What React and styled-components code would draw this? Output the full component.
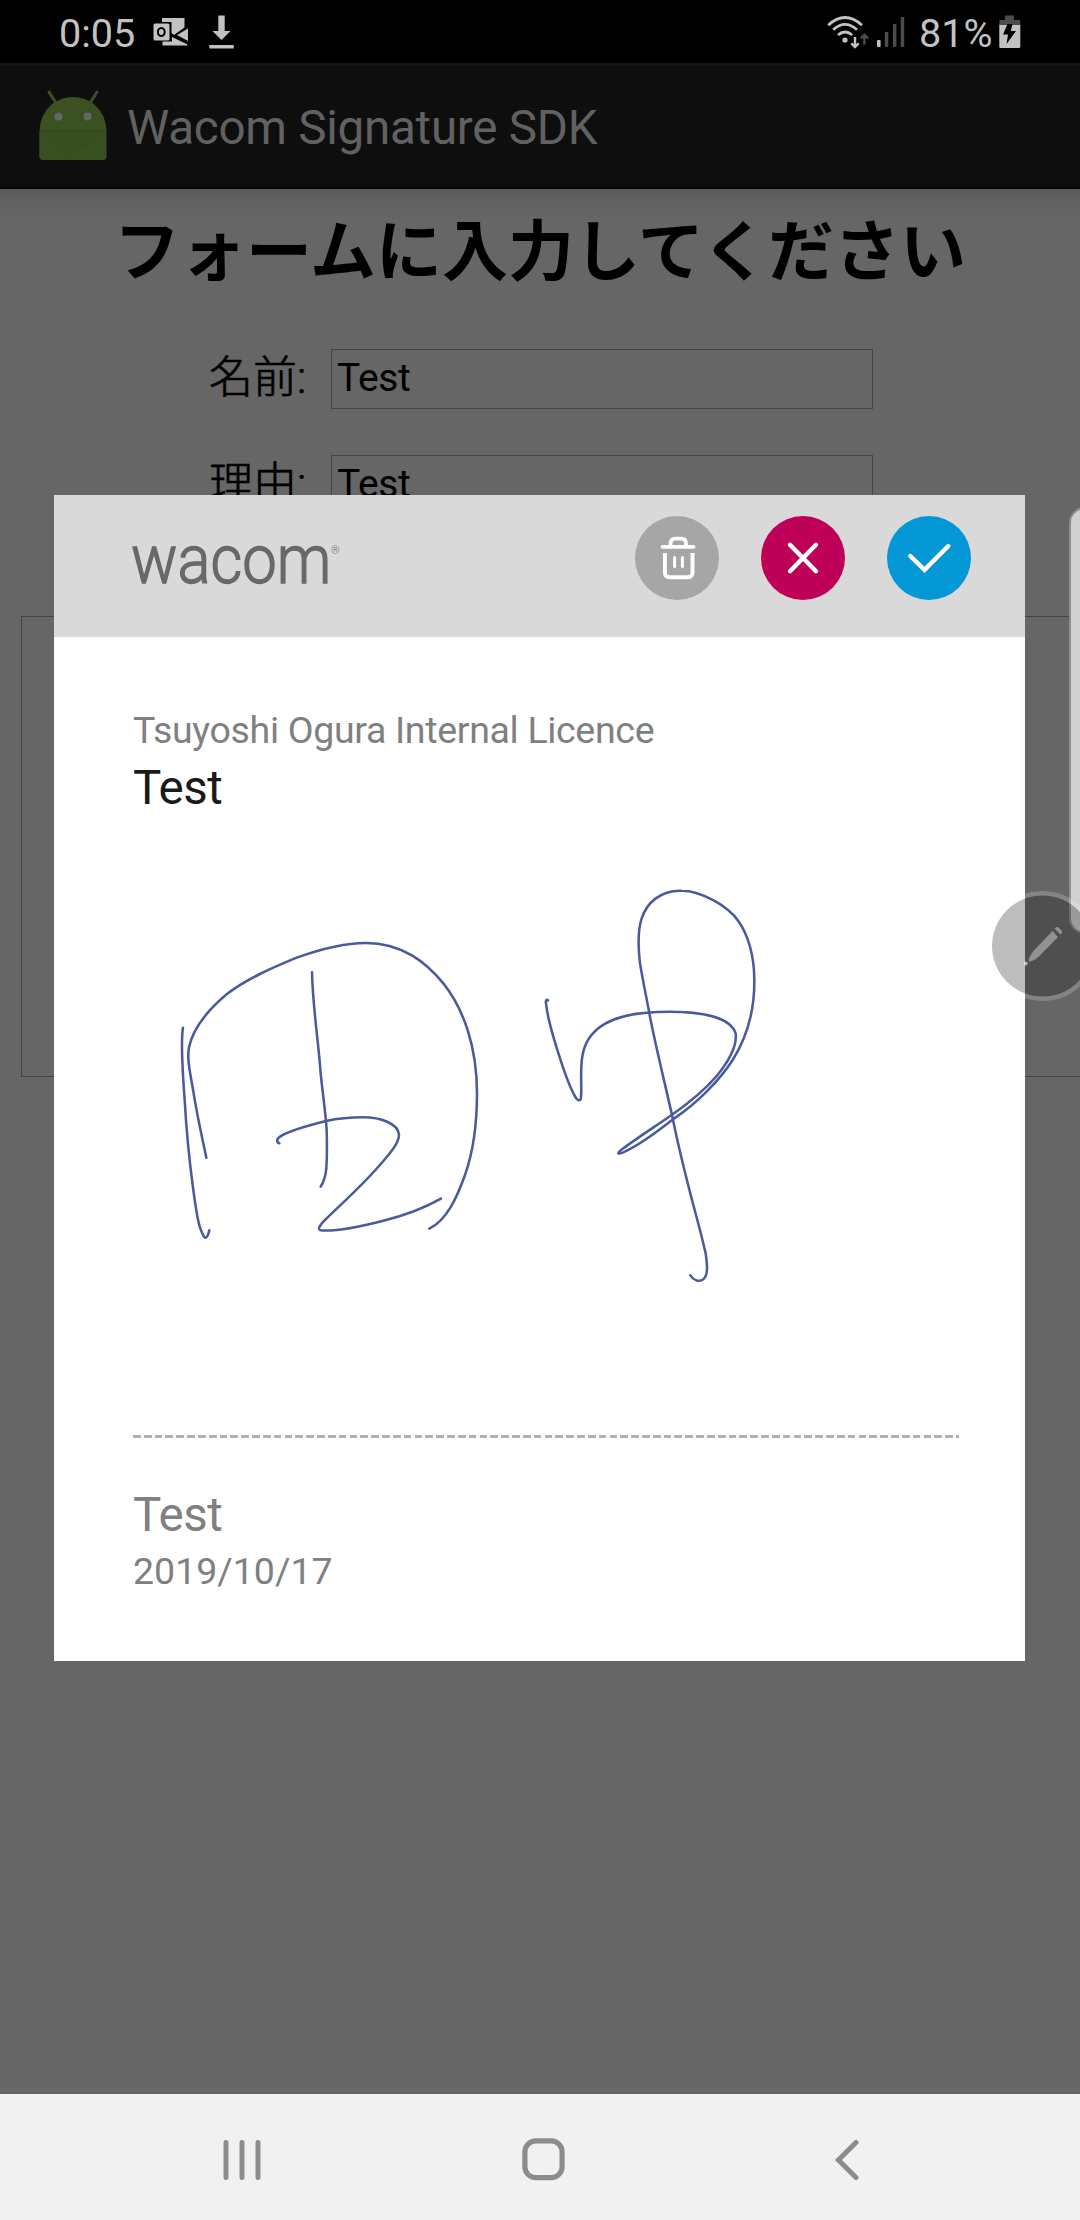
import React from 'react';
import styled, { createGlobalStyle } from 'styled-components';

const GlobalStyle = createGlobalStyle`
  * { box-sizing: border-box; }
  body { margin: 0; background: #666; font-family: Roboto, "Noto Sans CJK JP", sans-serif; }
  svg { display: block; flex: none; }
`;

const Screen = styled.div`
  position: relative;
  display: flex;
  flex-direction: column;
  width: 1080px;
  height: 2220px;
  overflow: hidden;
  background: #666;
`;

const StatusBar = styled.header`
  display: flex;
  align-items: center;
  justify-content: space-between;
  height: 63px;
  padding: 0 59px;
  background: #000;
`;

const StatusGroup = styled.div`
  display: flex;
  align-items: center;
`;

const StatusText = styled.span`
  width: ${(p) => p.$width}px;
  margin-right: ${(p) => p.$gap}px;
  font-size: 39.6px;
  line-height: 63px;
  padding-top: 3px;
  color: #c2c2c2;
  white-space: nowrap;
`;

const AppBar = styled.div`
  display: flex;
  align-items: center;
  gap: 19px;
  height: 126px;
  padding-left: 39px;
  background: linear-gradient(#0e0e0e 96%, #080808);
  border-top: 3px solid #161616;

  svg { margin-bottom: 5px; }
`;

const AppTitle = styled.h1`
  margin: 0;
  font-size: 47.6px;
  font-weight: 400;
  letter-spacing: -0.28px;
  line-height: 60px;
  color: #616161;
`;

const Page = styled.main`
  flex: 1;
  min-height: 0;
  overflow: hidden;
  background: linear-gradient(#595959, #606060 9px, #666 32px);
`;

const Heading = styled.h2`
  margin: 9px 0 0;
  font-family: "Noto Sans CJK JP", sans-serif;
  font-size: 66px;
  font-weight: 700;
  line-height: 96px;
  text-align: center;
  white-space: nowrap;
  color: #000;
`;

const Form = styled.div`
  display: flex;
  flex-direction: column;
  gap: 46px;
  margin-top: 55px;
  padding-left: 209px;
`;

const Field = styled.label`
  display: flex;
  align-items: center;
  height: 60px;
`;

const FieldLabel = styled.span`
  width: 122px;
  padding-bottom: 2px;
  font-family: Roboto, "Noto Sans CJK JP", sans-serif;
  font-size: 44px;
  font-weight: 300;
  line-height: 57px;
  color: #000;
  -webkit-text-stroke: 0.7px #000;
  white-space: nowrap;
`;

const FieldValue = styled.span`
  width: 542px;
  height: 60px;
  padding: 0 5px;
  border: 1px solid #444;
  font-size: 39px;
  letter-spacing: -0.4px;
  line-height: 57px;
  color: #000;
`;

const SignatureBox = styled.div`
  width: 1100px;
  height: 461px;
  margin: 101px 0 0 21px;
  border: 1px solid #444;
`;

const NavBar = styled.nav`
  display: flex;
  align-items: center;
  height: 126px;
  padding: 5px 0 0 222px;
  background: #f1f1f1;
`;

const Dialog = styled.section`
  position: absolute;
  top: 495px;
  left: 54px;
  display: flex;
  flex-direction: column;
  width: 971px;
  height: 1166px;
  background: #fff;
`;

const DialogHeader = styled.div`
  display: flex;
  justify-content: space-between;
  height: 142px;
  padding: 21px 54px 0 77px;
  background: #d9d9d9;
`;

const Brand = styled.div`
  display: flex;
  align-items: flex-start;
  height: 84px;
  padding-top: 4px;
`;

const BrandName = styled.span`
  width: 200px;
  font-size: 68px;
  font-weight: 300;
  line-height: 80px;
  color: #686868;
  -webkit-text-stroke: 1.4px #686868;
  transform: scaleX(0.905);
  transform-origin: 0 50%;
`;

const BrandMark = styled.span`
  padding-top: 25px;
  font-size: 11px;
  line-height: 12px;
  color: #888;
`;

const Actions = styled.div`
  display: flex;
  gap: 42px;
`;

const RoundButton = styled.button`
  display: flex;
  align-items: center;
  justify-content: center;
  width: 84px;
  height: 84px;
  padding: 0;
  border: 0;
  border-radius: 50%;
  background: ${(p) => p.$color};
`;

const DialogBody = styled.div`
  display: flex;
  flex-direction: column;
  padding: 70px 66px 0 79px;
`;

const SmallText = styled.div`
  margin-top: ${(p) => p.$top || 0}px;
  font-size: 37.5px;
  letter-spacing: ${(p) => p.$tracking}px;
  line-height: 46px;
  color: #808080;
  white-space: nowrap;
`;

const LargeText = styled.div`
  margin-top: ${(p) => p.$top}px;
  font-size: 47.5px;
  letter-spacing: -0.5px;
  line-height: 58px;
  color: ${(p) => p.$color};
`;

const DashedRule = styled.div`
  height: 3px;
  background: repeating-linear-gradient(90deg, #b0b0b0 0 7.7px, transparent 7.7px 10.83px);
`;

const EdgeHandle = styled.div`
  position: absolute;
  top: 507px;
  left: 1069px;
  width: 40px;
  height: 427px;
  border: 2px solid #909090;
  border-radius: 16px;
  background: #d0d0d0;
`;

const PenButton = styled.div`
  position: absolute;
  top: 891px;
  left: 988px;
  width: 110px;
  height: 110px;
`;

const MailIcon = () => (
  <svg width="36" height="29" viewBox="0 0 36 29">
    <path d="M9 1H31.500V10.500L21 18L18.500 16V5H9Z" fill="#c2c2c2" />
    <path d="M9.500 24.500H19V20L34.500 27.500V28.500H9.500Z" fill="#c2c2c2" />
    <path d="M24 18L35 11.500V24Z" fill="#c2c2c2" />
    <rect x="0.500" y="6.500" width="16" height="17" rx="1.500" fill="#c2c2c2" />
    <ellipse cx="8.300" cy="15" rx="3.400" ry="4" fill="none" stroke="#000" strokeWidth="2" />
  </svg>
);

const DownloadIcon = () => (
  <svg width="25" height="34" viewBox="0 0 25 34">
    <path d="M9.300 0.500H15.700V16H21.500L12.500 25L3.500 16H9.300Z" fill="#c2c2c2" />
    <rect x="0.300" y="30" width="24.400" height="3.500" fill="#c2c2c2" />
  </svg>
);

const WifiIcon = () => (
  <svg width="42" height="34" viewBox="0 0 42 34">
    <g fill="none" stroke="#c2c2c2" strokeWidth="2.800">
      <path d="M1.200 10.200Q18 -5.200 35 10.200" />
      <path d="M6.200 14.800Q18 4 30 14.800" />
      <path d="M11 20Q18 14 25.200 20" />
    </g>
    <circle cx="18" cy="25" r="2.600" fill="#c2c2c2" />
    <path d="M28 22V32M24.300 28.300L28 32L31.700 28.300" fill="none" stroke="#c2c2c2" strokeWidth="2.400" />
    <path d="M37.400 29.500V20M33.600 23.500L37.400 19.700L41.200 23.500" fill="none" stroke="#4c4c4c" strokeWidth="2.400" />
  </svg>
);

const SignalIcon = () => (
  <svg width="28" height="32" viewBox="0 0 28 32">
    <rect x="0" y="24" width="3.600" height="7" rx="1" fill="#c2c2c2" />
    <rect x="7.800" y="16" width="3.500" height="15" rx="1" fill="#4c4c4c" />
    <rect x="15.900" y="8" width="3.500" height="23" rx="1" fill="#4c4c4c" />
    <rect x="23.700" y="1" width="3.500" height="30" rx="1" fill="#4c4c4c" />
  </svg>
);

const BatteryIcon = () => (
  <svg width="22" height="34" viewBox="0 0 22 34">
    <path d="M6 0.500H15V5H20Q21.300 5 21.300 6.300V11H0.300V6.300Q0.300 5 1.600 5H6Z" fill="#4c4c4c" />
    <path d="M0.300 10H21.300V31.500Q21.300 33 20 33H1.600Q0.300 33 0.300 31.500Z" fill="#c2c2c2" />
    <path d="M8.500 9H13.500L11.800 16H17L7.500 29L9 19.500H4Z" fill="#000" />
  </svg>
);

const AndroidIcon = () => (
  <svg width="69" height="72" viewBox="0 0 69 72">
    <g stroke="#3b5122" strokeWidth="3" strokeLinecap="round">
      <path d="M10 3L17 14M58 3L51 14" />
    </g>
    <path d="M0.500 42Q1 26 12 16Q22 8 34 8Q46 8 56 16Q67 26 67.500 42Z" fill="#3b5122" />
    <path d="M0.500 42H67.500V67Q67.500 71 63.500 71H4.500Q0.500 71 0.500 67Z" fill="#395022" />
    <path d="M0.500 42L28 71H4.500Q0.500 71 0.500 67Z" fill="#3a4f22" />
    <path d="M0.500 42H67.500L30 70Z" fill="#364a20" opacity="0.350" />
    <path d="M0.500 42H67.500" stroke="#30421c" strokeWidth="1.200" />
    <circle cx="19.500" cy="27.500" r="4" fill="#666" />
    <circle cx="48.500" cy="27.500" r="4" fill="#666" />
  </svg>
);

const TrashIcon = () => (
  <svg width="84" height="84" viewBox="0 0 84 84" fill="none" stroke="#fff">
    <path d="M27.500 30.800H58.500" strokeWidth="3.800" strokeLinecap="round" />
    <path d="M35.500 30V28Q35.500 22.600 40.500 22.600H46.500Q51 22.600 51 28V30" strokeWidth="3.800" />
    <path d="M29.900 37V56.500Q29.900 61.200 34.500 61.200H53Q57.500 61.200 57.500 56.500V37" strokeWidth="3.900" />
    <path d="M39.600 41.500V50.500M47.400 41.500V50.500" strokeWidth="3" strokeLinecap="round" />
  </svg>
);

const CrossIcon = () => (
  <svg width="84" height="84" viewBox="0 0 84 84" fill="none" stroke="#fff">
    <path d="M29 28.800L55 55.200M55 28.800L29 55.200" strokeWidth="4.400" strokeLinecap="round" />
  </svg>
);

const CheckIcon = () => (
  <svg width="84" height="84" viewBox="0 0 84 84" fill="none" stroke="#fff">
    <path d="M23.300 40L37.500 53.800L61.300 30" strokeWidth="4.400" strokeLinecap="round" strokeLinejoin="miter" />
  </svg>
);

const Handwriting = () => (
  <svg width="826" height="618" viewBox="-51 -129 2478 1854" fill="none" stroke="#4a5b9b" strokeWidth="7.600" strokeLinecap="round" strokeLinejoin="round">
    <path d="M99 503C92 540 98 640 104 720C112 860 118 900 130 990C138 1050 144 1090 152 1108C158 1122 160 1132 166 1133C173 1133 175 1122 178 1111" />
    <path d="M169 893C158 840 142 770 131 700C122 645 110 600 117 562C126 520 150 470 230 403C290 355 380 318 440 293C510 268 580 249 647 249C760 249 830 310 880 370C940 445 981 560 981 700C981 790 968 880 945 945C920 1015 890 1080 838 1106" />
    <path d="M486 337C488 440 505 540 512 640C518 700 527 760 530 810C531 860 532 880 529 925C527 945 522 965 512 980" />
    <path d="M388 850C380 848 378 838 390 830C420 810 480 795 528 783C570 774 600 772 640 772C690 772 745 790 747 824C747 845 730 868 700 903C640 975 570 1035 525 1080C512 1092 500 1108 512 1111C560 1115 650 1095 700 1082C780 1063 830 1040 873 1016" />
    <path d="M1194 421C1186 416 1187 425 1189 437C1195 490 1215 550 1235 610C1250 655 1263 690 1278 714C1284 722 1288 723 1292 718C1296 705 1292 660 1294 620C1296 560 1315 530 1345 505C1390 468 1460 455 1560 455C1650 455 1740 470 1757 520C1762 560 1735 605 1700 648C1660 695 1615 730 1565 765C1510 803 1460 835 1420 865C1400 880 1400 885 1420 877C1470 855 1520 817 1573 775C1640 730 1710 660 1748 600C1792 530 1814 450 1813 360C1813 290 1795 225 1765 183C1735 140 1655 92 1595 92C1530 90 1490 130 1475 175C1462 215 1464 260 1470 310C1480 370 1490 415 1499 465C1515 550 1540 650 1566 765C1585 860 1605 940 1630 1035C1645 1090 1660 1150 1667 1180C1672 1215 1675 1245 1660 1258C1647 1268 1630 1260 1621 1246" />
  </svg>
);

const PenIcon = () => (
  <svg width="110" height="110" viewBox="0 0 110 110">
    <circle cx="54.500" cy="55" r="50.500" fill="#191919" fillOpacity="0.288" />
    <circle cx="54.500" cy="55" r="52.700" fill="none" stroke="#fff" strokeOpacity="0.200" strokeWidth="4.500" />
    <g fill="#fff" fillOpacity="0.380">
      <path d="M64.500 40L70 46L51 65.500Q45 70.500 41 70.500Q39.500 68 45.500 60Z" />
      <path d="M66.500 37.500Q68 35 70.500 36.500L73.500 39.500Q75 42 72.500 43.500Z" />
      <circle cx="37.700" cy="72.500" r="1.900" fillOpacity="0.600" />
    </g>
  </svg>
);

const RecentsIcon = () => (
  <svg width="42" height="42" viewBox="0 0 42 42" stroke="#8c8c8c" strokeWidth="5" strokeLinecap="round">
    <path d="M4 3.500V38.500M20 3.500V38.500M36 3.500V38.500" />
  </svg>
);

const HomeIcon = () => (
  <svg width="43" height="43" viewBox="0 0 43 43">
    <rect x="2.900" y="2.900" width="37.200" height="36.800" rx="11" fill="none" stroke="#8c8c8c" strokeWidth="5.200" />
  </svg>
);

const BackIcon = () => (
  <svg width="26" height="42" viewBox="0 0 26 42">
    <path d="M22 3.500L4.500 21L22 38.500" fill="none" stroke="#8c8c8c" strokeWidth="5" strokeLinecap="round" />
  </svg>
);

const Cluster = styled.div`
  display: flex;
  margin-right: ${(p) => p.$gap || 0}px;
`;

const fields = [
  { label: '名前:', value: 'Test' },
  { label: '理由:', value: 'Test' },
];

export default function App() {
  return (
    <Screen>
      <GlobalStyle />
      <StatusBar>
        <StatusGroup>
          <StatusText $width={76} $gap={18}>0:05</StatusText>
          <Cluster $gap={20}><MailIcon /></Cluster>
          <DownloadIcon />
        </StatusGroup>
        <StatusGroup>
          <Cluster $gap={8}><WifiIcon /></Cluster>
          <Cluster $gap={14}><SignalIcon /></Cluster>
          <StatusText $width={74} $gap={6}>81%</StatusText>
          <BatteryIcon />
        </StatusGroup>
      </StatusBar>
      <AppBar>
        <AndroidIcon />
        <AppTitle>Wacom Signature SDK</AppTitle>
      </AppBar>
      <Page>
        <Heading>フォームに入力してください</Heading>
        <Form>
          {fields.map((f) => (
            <Field key={f.label}>
              <FieldLabel>{f.label}</FieldLabel>
              <FieldValue>{f.value}</FieldValue>
            </Field>
          ))}
        </Form>
        <SignatureBox />
      </Page>
      <NavBar>
        <Cluster $gap={258}><RecentsIcon /></Cluster>
        <Cluster $gap={269}><HomeIcon /></Cluster>
        <BackIcon />
      </NavBar>
      <Dialog>
        <DialogHeader>
          <Brand>
            <BrandName>wacom</BrandName>
            <BrandMark>®</BrandMark>
          </Brand>
          <Actions>
            <RoundButton $color="#a6a6a6" aria-label="Clear"><TrashIcon /></RoundButton>
            <RoundButton $color="#be0059" aria-label="Cancel"><CrossIcon /></RoundButton>
            <RoundButton $color="#0497d6" aria-label="OK"><CheckIcon /></RoundButton>
          </Actions>
        </DialogHeader>
        <DialogBody>
          <SmallText $tracking={-0.32}>Tsuyoshi Ogura Internal Licence</SmallText>
          <LargeText $top={6} $color="#1a1a1a">Test</LargeText>
          <Handwriting />
          <DashedRule />
          <LargeText $top={48} $color="#808080">Test</LargeText>
          <SmallText $top={4} $tracking={0}>2019/10/17</SmallText>
        </DialogBody>
      </Dialog>
      <EdgeHandle />
      <PenButton><PenIcon /></PenButton>
    </Screen>
  );
}
